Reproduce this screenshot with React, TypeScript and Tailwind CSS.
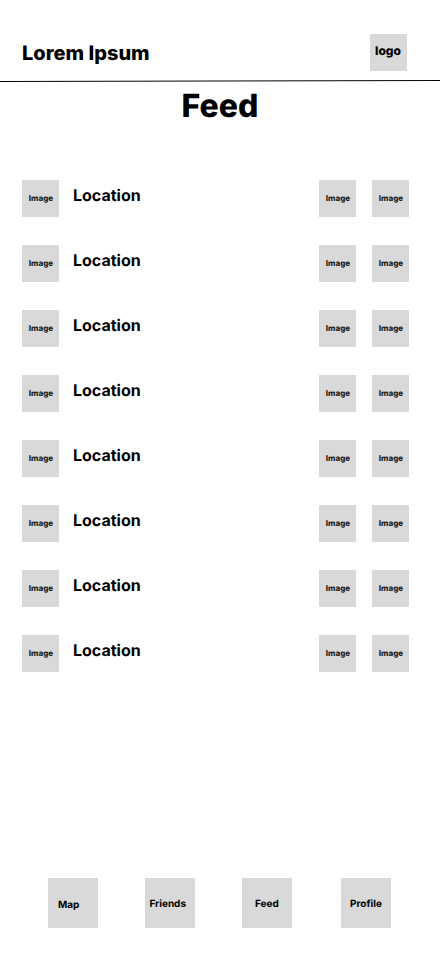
const rows = Array.from({ length: 8 }, (_, i) => i);

function Thumb() {
  return (
    <div className="h-[37px] w-[37px] shrink-0 bg-[#d9d9d9] pt-[13px] pl-[6.75px] text-[8px] leading-[10px] font-extrabold whitespace-nowrap text-[#222]">
      Image
    </div>
  );
}

const tabs = [
  { label: "Map", box: "pl-[10px] pt-[21px]" },
  { label: "Friends", box: "ml-[47px] pl-[4.4px] pt-5" },
  { label: "Feed", box: "ml-[47px] pl-[13px] pt-5" },
  { label: "Profile", box: "ml-[49px] pl-[9px] pt-5" },
];

export default function App() {
  return (
    <div className="flex h-[956px] w-[440px] flex-col overflow-hidden bg-white font-['Inter',sans-serif] text-black [text-rendering:geometricPrecision]">
      <header className="flex h-20 shrink-0 justify-between pr-[33px] pl-[22px]">
        <div className="pt-[41px] text-[20px] leading-6 font-extrabold">Lorem Ipsum</div>
        <div className="mt-[34px] h-[37px] w-[37px] bg-[#d9d9d9] pt-[9px] pl-[5px] text-[12px] leading-[15px] font-extrabold whitespace-nowrap">
          logo
        </div>
      </header>
      <svg className="block h-[2px] w-[440px] shrink-0" viewBox="0 0 440 2">
        <path d="M0 1.5L440 0.5" stroke="black" fill="none" />
      </svg>
      <h1 className="h-[98px] shrink-0 pt-1 text-center text-[32px] leading-[39px] font-extrabold">Feed</h1>
      <main className="flex flex-col gap-7 pr-[31px] pl-[22px]">
        {rows.map((i) => (
          <div key={i} className="flex h-[37px]">
            <Thumb />
            <div className="ml-[14px] flex-1 pt-[6px] text-[16px] leading-[19px] font-bold">Location</div>
            <div className="flex gap-4">
              <Thumb />
              <Thumb />
            </div>
          </div>
        ))}
      </main>
      <nav className="mt-auto mb-7 flex pl-12">
        {tabs.map((t) => (
          <div key={t.label} className={`h-[50px] w-[50px] bg-[#d9d9d9] text-[10px] leading-3 font-bold whitespace-nowrap ${t.box}`}>
            {t.label}
          </div>
        ))}
      </nav>
    </div>
  );
}
